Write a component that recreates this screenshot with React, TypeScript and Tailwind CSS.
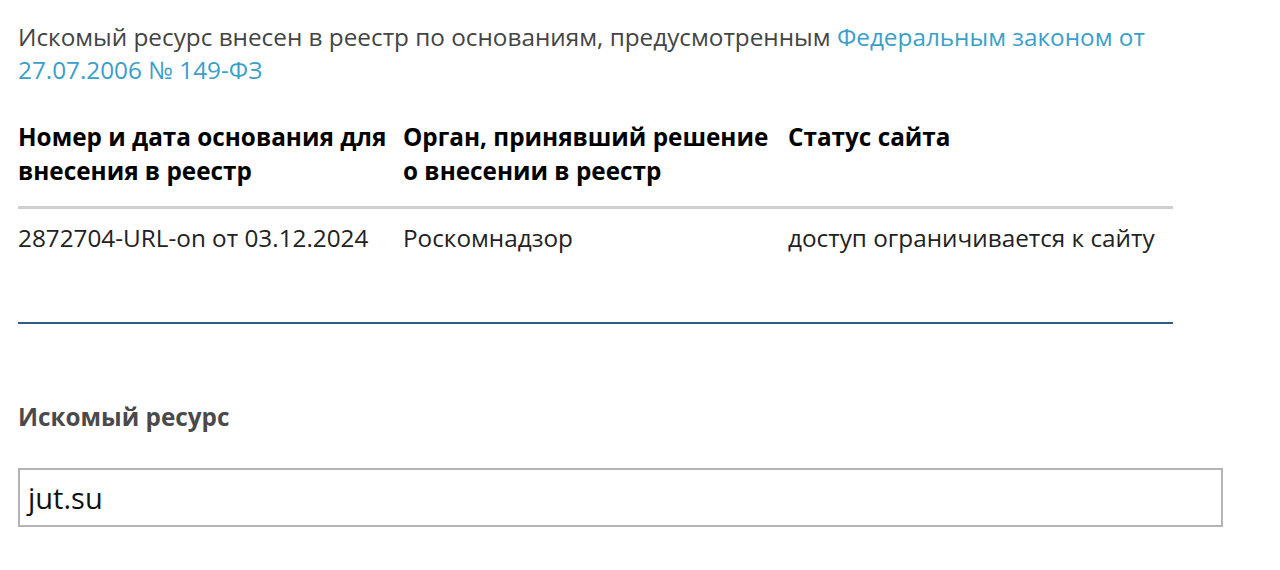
export default function App() {
  return (
    <div className="min-h-[570px] bg-white font-['Open_Sans',sans-serif] text-[24.3px]">
      <div className="pl-[18px] pt-[20px]">
        <p className="w-[1160px] leading-[33px] text-[#444]">
          Искомый ресурс внесен в реестр по основаниям, предусмотренным{' '}
          <a className="text-[#3aa0c9]">Федеральным законом от 27.07.2006 № 149-ФЗ</a>
        </p>

        <div className="mt-[34px] w-[1155px]">
          <div className="grid grid-cols-3 pb-[18px] font-bold leading-[34px] text-black">
            <div className="pr-2">Номер и дата основания для внесения в реестр</div>
            <div className="pr-2">Орган, принявший решение о внесении в реестр</div>
            <div>Статус сайта</div>
          </div>
          <div className="h-[3px] bg-[#cfcfcf]" />
          <div className="grid grid-cols-3 pt-[12px] pb-[67px] leading-[34px] text-[#222]">
            <div>2872704-URL-on от 03.12.2024</div>
            <div>Роскомнадзор</div>
            <div>доступ ограничивается к сайту</div>
          </div>
          <div className="h-[2px] bg-[#2f5b88]" />
        </div>

        <div className="mt-[76px] font-bold leading-[34px] text-[#4a4a4a]">Искомый ресурс</div>

        <div className="mt-[34px] flex h-[59px] w-[1205px] items-center border-2 border-[#b4b4b4] px-[8px] text-[29px] text-[#111]">
          jut.su
        </div>
      </div>
    </div>
  );
}
